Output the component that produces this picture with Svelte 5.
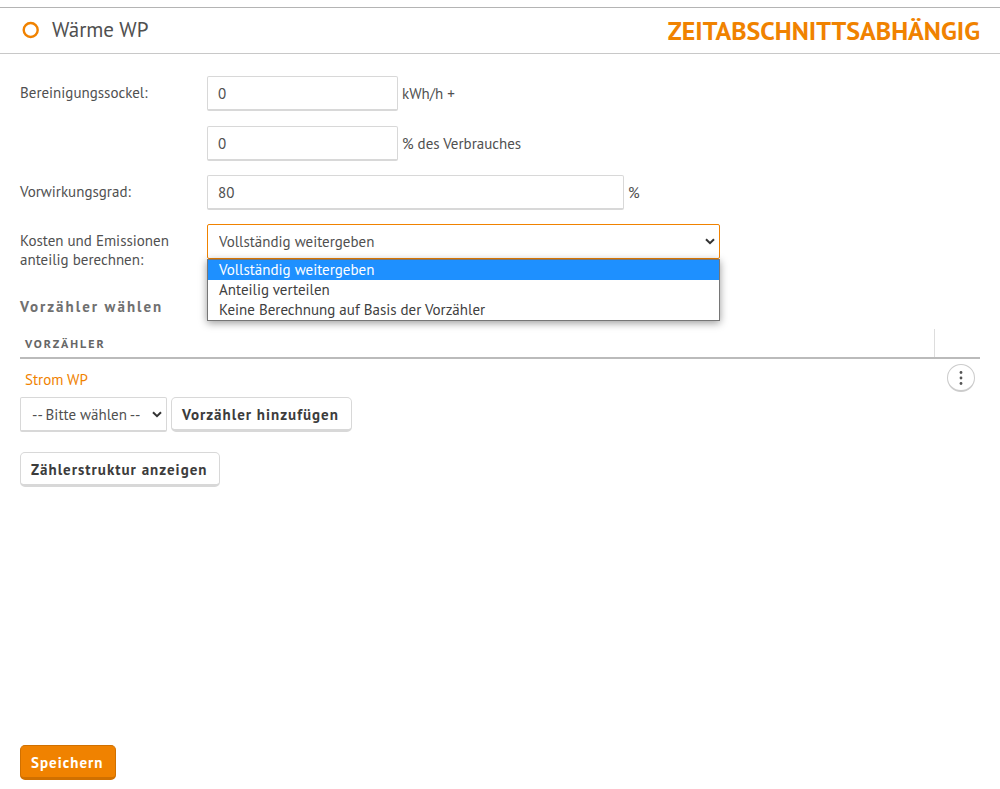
<script>
  const modes = [
    'Vollständig weitergeben',
    'Anteilig verteilen',
    'Keine Berechnung auf Basis der Vorzähler'
  ];

  let base = $state('0');
  let share = $state('0');
  let efficiency = $state('80');
  let mode = $state(modes[0]);
  let open = $state(true);
  let meter = $state('');

  function choose(value) {
    mode = value;
    open = false;
  }

  function toggle(event) {
    event.preventDefault();
    open = !open;
  }
</script>

<div class="page">
  <header>
    <h1>
      <svg width="18" height="18" viewBox="0 0 18 18" aria-hidden="true">
        <circle cx="8.7" cy="9" r="7" fill="none" stroke="#f08200" stroke-width="2.4" />
      </svg>
      Wärme WP
    </h1>
    <strong class="status">ZEITABSCHNITTSABHÄNGIG</strong>
  </header>

  <main>
    <div class="fields">
      <label class="name" for="base">Bereinigungssockel:</label>
      <div class="stack">
        <div class="line">
          <input class="short" id="base" type="text" bind:value={base} />
          <span>kWh/h +</span>
        </div>
        <div class="line">
          <input class="short" id="share" type="text" bind:value={share} />
          <label for="share">% des Verbrauches</label>
        </div>
      </div>

      <label class="name" for="efficiency">Vorwirkungsgrad:</label>
      <div class="line">
        <input class="medium" id="efficiency" type="text" bind:value={efficiency} />
        <span>%</span>
      </div>

      <label class="name" for="mode">Kosten und Emissionen anteilig berechnen:</label>
      <div class="picker">
        <span class="drop">
          <select id="mode" class:open bind:value={mode} onmousedown={toggle}>
            {#each modes as item}
              <option>{item}</option>
            {/each}
          </select>
          <svg class="arrow" width="10" height="7" viewBox="0 0 10 7" aria-hidden="true">
            <path d="M1 1.2 5 5.2 9 1.2" fill="none" stroke="#333" stroke-width="2" />
          </svg>
        </span>
        {#if open}
          <div class="menu" role="listbox" aria-label="Kosten und Emissionen anteilig berechnen">
            {#each modes as item}
              <button type="button" role="option" aria-selected={item === mode} onclick={() => choose(item)}>{item}</button>
            {/each}
          </div>
        {/if}
      </div>
    </div>

    <h2>Vorzähler wählen</h2>

    <table>
      <thead>
        <tr>
          <th scope="col">VORZÄHLER</th>
          <td class="tools"></td>
        </tr>
      </thead>
      <tbody>
        <tr>
          <td><a href="#strom-wp">Strom WP</a></td>
          <td class="tools">
            <button class="more" type="button" aria-label="Aktionen">
              <svg width="4" height="16" viewBox="0 0 4 16" fill="#555" aria-hidden="true">
                <circle cx="2" cy="2.5" r="1.4" />
                <circle cx="2" cy="8" r="1.4" />
                <circle cx="2" cy="13.5" r="1.4" />
              </svg>
            </button>
          </td>
        </tr>
      </tbody>
    </table>

    <div class="add">
      <span class="drop">
        <select aria-label="Vorzähler" bind:value={meter}>
          <option value="">-- Bitte wählen --</option>
        </select>
        <svg class="arrow" width="10" height="7" viewBox="0 0 10 7" aria-hidden="true">
          <path d="M1 1.2 5 5.2 9 1.2" fill="none" stroke="#333" stroke-width="2" />
        </svg>
      </span>
      <button class="button" type="button">Vorzähler hinzufügen</button>
    </div>

    <button class="button" type="button">Zählerstruktur anzeigen</button>
  </main>

  <footer>
    <button class="button primary" type="submit">Speichern</button>
  </footer>
</div>

<style>
  :global(body) {
    margin: 0;
    background: #fff;
  }

  .page {
    box-sizing: border-box;
    display: flex;
    flex-direction: column;
    min-height: 100vh;
    padding: 7px 0 9px;
    color: #505050;
    font: 15px/19px 'PT Sans', 'Noto Sans', sans-serif;
  }

  .page :is(input, select, button) {
    box-sizing: border-box;
    margin: 0;
    color: inherit;
    font: inherit;
  }

  header {
    display: flex;
    align-items: center;
    justify-content: space-between;
    gap: 20px;
    height: 45px;
    padding: 0 20px;
    border-top: 1px solid #b4b4b4;
    border-bottom: 1px solid #c8c8c8;
  }

  h1 {
    display: flex;
    align-items: center;
    gap: 12px;
    margin: 0;
    padding: 0 0 2px 2px;
    font-size: 21px;
    font-weight: 400;
    line-height: 24px;
  }

  .status {
    color: #f08200;
    font-size: 26px;
    font-weight: 700;
    line-height: 32px;
  }

  main {
    flex: 1;
    padding: 22px 20px 20px;
  }

  .fields {
    display: grid;
    grid-template-columns: 160px 1fr;
    gap: 14px 27px;
  }

  .name {
    padding-top: 7px;
  }

  .stack {
    display: grid;
    gap: 15px;
  }

  .line {
    display: flex;
    align-items: center;
    gap: 4px;
  }

  input,
  select {
    width: 100%;
    height: 35px;
    padding: 0 10px;
    border: 1px solid #d8d8d8;
    border-bottom-width: 2px;
    border-radius: 2px;
    background: #fff;
  }

  .short {
    max-width: 191px;
  }

  .medium {
    max-width: 417px;
  }

  .picker {
    position: relative;
    max-width: 513px;
    height: 35px;
  }

  .drop {
    display: flex;
    position: relative;
  }

  select {
    appearance: none;
    padding: 0 26px 0 11px;
    outline: none;
  }

  select.open {
    border: 1px solid #f08200;
  }

  .arrow {
    position: absolute;
    top: 14px;
    right: 5px;
    pointer-events: none;
  }

  .menu {
    position: absolute;
    z-index: 1;
    top: 100%;
    right: 0;
    left: 0;
    display: flex;
    flex-direction: column;
    border: 1px solid #767676;
    background: #fff;
    box-shadow: 0 2px 8px rgb(0 0 0 / 40%);
  }

  .menu button {
    height: 20px;
    padding: 0 11px;
    border: 0;
    background: none;
    color: #404040;
    line-height: 20px;
    text-align: left;
  }

  .menu button[aria-selected='true'] {
    background: #1e90ff;
    color: #fff;
  }

  h2 {
    margin: 28px 0 12px;
    color: #707070;
    font-size: 15px;
    font-weight: 700;
    letter-spacing: 2px;
    line-height: 20px;
  }

  table {
    width: 100%;
    border-collapse: collapse;
  }

  th,
  td {
    padding: 0 5px;
    text-align: left;
  }

  thead th,
  thead td {
    height: 28px;
    border-bottom: 2px solid #bbb;
  }

  th {
    color: #666;
    font-size: 12px;
    letter-spacing: 2px;
  }

  thead .tools {
    border-left: 1px solid #ddd;
  }

  .tools {
    width: 35px;
  }

  tbody td {
    height: 36px;
    padding-top: 2px;
  }

  tbody .tools {
    padding-top: 0;
    text-align: right;
  }

  a {
    color: #f08200;
    text-decoration: none;
  }

  .more {
    display: inline-grid;
    place-items: center;
    width: 28px;
    height: 28px;
    padding: 0;
    border: 1px solid #ccc;
    border-bottom-width: 2px;
    border-radius: 50%;
    background: #fff;
    vertical-align: middle;
  }

  .add {
    display: flex;
    gap: 4px;
    margin-bottom: 20px;
  }

  .add .drop {
    width: 147px;
  }

  .page .button {
    height: 35px;
    padding: 2px 12px 0 10px;
    border: 1px solid #d8d8d8;
    border-bottom-width: 3px;
    border-radius: 5px;
    background: #fff;
    color: #3c3c3c;
    font-weight: 700;
    letter-spacing: 1px;
  }

  footer {
    padding: 0 20px;
  }

  .page .primary {
    border-color: #d07000;
    background: #f08200;
    color: #fff;
  }
</style>
